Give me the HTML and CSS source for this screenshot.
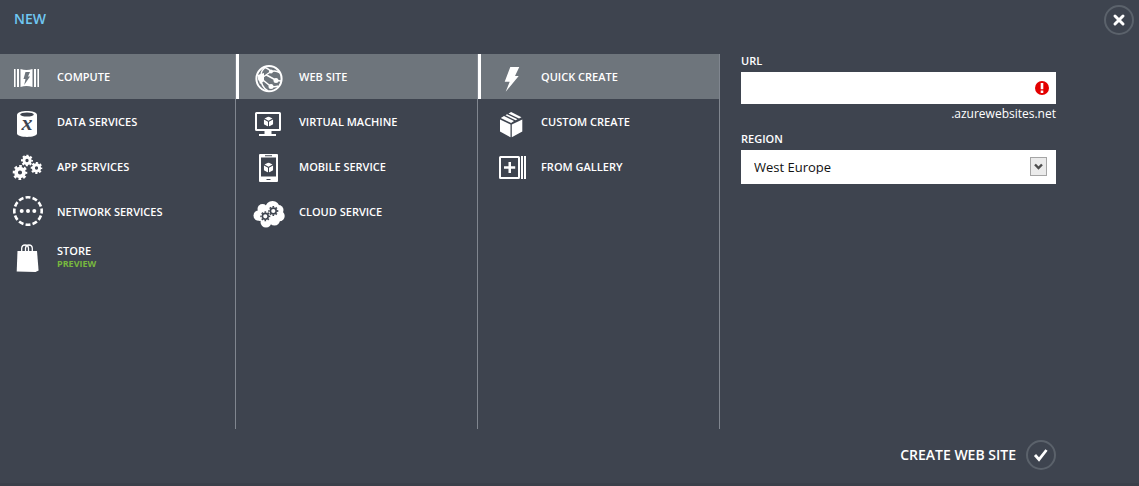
FILE: index.html
```html
<!DOCTYPE html>
<html lang="en">
<head>
<meta charset="utf-8">
<title>New web site</title>
<meta name="viewport" content="width=device-width, initial-scale=1">
<link rel="stylesheet" href="styles.css">
</head>
<body>
<svg class="defs" aria-hidden="true">
  <symbol id="gear" viewBox="-8 -8 16 16">
    <circle r="4.200" fill="none" stroke="currentColor" stroke-width="4"/>
    <circle r="6.600" fill="none" stroke="currentColor" stroke-width="2.800" pathLength="16" stroke-dasharray="1.100 .9" stroke-dashoffset="0.550"/>
  </symbol>
  <symbol id="cube" viewBox="0 0 10 10">
    <path fill="currentColor" d="M5 0L9 2 5 4.2 1 2ZM.4 3L4.5 5.2V10L.4 7.8ZM9.6 3L5.5 5.2V10L9.6 7.8Z"/>
  </symbol>
</svg>
<main class="drawer">
  <header class="top">
    <h1 class="title">NEW</h1>
    <button class="round" type="button" aria-label="Close">
      <svg class="glyph" viewBox="0 0 26 26"><path d="M9 9L17 17M17 9L9 17" stroke="currentColor" stroke-width="3" stroke-linecap="round"/></svg>
    </button>
  </header>

  <div class="body">
    <nav class="column first" aria-label="Category">
      <button class="item selected" type="button">
        <svg class="icon" viewBox="0 0 34 34"><path fill="currentColor" d="M4 9h1.6v18H4zM7 9h2v18H7zM24 9h2v18h-2zM27.4 9H29v18h-1.6zM10.5 9q6 2 12 0v18q-6-2-12 0z"/><path class="cut" d="M15.5 12h4.500l-2 4.500h2L14.200 25l1.300-6H13.500z"/></svg>
        <span class="label">COMPUTE</span>
      </button>
      <button class="item" type="button">
        <svg class="icon" viewBox="0 0 34 34"><path fill="currentColor" d="M7 10C7 4.700 27 4.700 27 10V28.500C27 33 7 33 7 28.500Z"/><ellipse class="cut" cx="17" cy="9.500" rx="6.800" ry="2"/><text class="cut variable" x="17" y="25" text-anchor="middle">x</text></svg>
        <span class="label">DATA SERVICES</span>
      </button>
      <button class="item" type="button">
        <svg class="icon" viewBox="0 0 34 34"><use href="#gear" x="11" y="4.500" width="12" height="12"/><use href="#gear" x="2.500" y="15" width="15" height="15"/><use href="#gear" x="20.500" y="12" width="12" height="12"/></svg>
        <span class="label">APP SERVICES</span>
      </button>
      <button class="item" type="button">
        <svg class="icon" viewBox="0 0 34 34"><circle cx="18" cy="16" r="13.700" fill="none" stroke="currentColor" stroke-width="2.600" pathLength="48" stroke-dasharray="2.800 1.200" stroke-dashoffset="1.400"/><g fill="currentColor"><circle cx="11.700" cy="16" r="2"/><circle cx="18" cy="16" r="2"/><circle cx="24.300" cy="16" r="2"/></g></svg>
        <span class="label">NETWORK SERVICES</span>
      </button>
      <button class="item" type="button">
        <svg class="icon" viewBox="0 0 34 34"><path fill="currentColor" d="M7.500 11H27L28.600 30.500 25.500 32 6.700 31.500Z"/><path fill="none" stroke="currentColor" stroke-width="1.300" d="M11.700 12V8Q12 5 15 5T18.500 8V12M15.500 12V8Q16 5 19 5T22.300 8V12"/></svg>
        <span class="label">STORE<small class="tag">PREVIEW</small></span>
      </button>
    </nav>

    <nav class="column" aria-label="Service">
      <button class="item selected" type="button">
        <svg class="icon" viewBox="0 0 34 34"><g fill="none" stroke="currentColor"><circle cx="17" cy="18.700" r="12.600" stroke-width="2"/><path stroke-width="1.500" d="M9 18.500L19 11.500Q15 7.500 12 7.500M19 11.500Q24 10 28 13M9 18.500Q8 12 12.500 8M9 18.500Q9 27 16 31M9 18.500L19 26.500Q24 27 26 26M14.500 15L24.500 20.500M24.500 20.500L29 21"/></g><g fill="currentColor"><path d="M5.500 15L12 13V21L8 24Z"/><circle cx="9" cy="18.500" r="3"/><circle cx="19" cy="11.500" r="2"/><circle cx="24" cy="20.500" r="2.500"/><circle cx="19" cy="26.500" r="2.500"/></g></svg>
        <span class="label">WEB SITE</span>
      </button>
      <button class="item" type="button">
        <svg class="icon" viewBox="0 0 34 34"><rect x="4" y="8" width="24" height="17" rx=".5" fill="none" stroke="currentColor" stroke-width="2"/><path fill="currentColor" d="M12.500 25h7v4h4.500v2H7v-2h5.500z"/><use href="#cube" x="11.500" y="11.500" width="10" height="10"/></svg>
        <span class="label">VIRTUAL MACHINE</span>
      </button>
      <button class="item" type="button">
        <svg class="icon" viewBox="0 0 34 34"><path fill="currentColor" fill-rule="evenodd" d="M8 4H25Q26 4 26 5V31Q26 32 25 32H8Q7 32 7 31V5Q7 4 8 4ZM9 7.500V26.500H24V7.500ZM13 5.300V6.200H20V5.300ZM14.500 29V30H18.500V29Z"/><use href="#cube" x="11.500" y="12.500" width="10" height="10"/></svg>
        <span class="label">MOBILE SERVICE</span>
      </button>
      <button class="item" type="button">
        <svg class="icon" viewBox="0 0 34 34"><g fill="currentColor"><circle cx="6.800" cy="20.500" r="5.300"/><circle cx="10.500" cy="14" r="5"/><circle cx="20.500" cy="13.200" r="7.200"/><circle cx="26.500" cy="15" r="5"/><circle cx="27.500" cy="21" r="5.200"/><circle cx="14" cy="27" r="5.500"/><circle cx="22.500" cy="25" r="5.500"/><path d="M7 14H27V25.800H7z"/></g><g class="cut" fill="none"><circle cx="13.300" cy="21.300" r="2.900" stroke-width="1.600"/><circle cx="13.300" cy="21.300" r="4.300" stroke-width="1.400" pathLength="16" stroke-dasharray="1 1" stroke-dashoffset=".5"/><circle cx="21.300" cy="16" r="2.900" stroke-width="1.600"/><circle cx="21.300" cy="16" r="4.300" stroke-width="1.400" pathLength="16" stroke-dasharray="1 1" stroke-dashoffset=".5"/></g></svg>
        <span class="label">CLOUD SERVICE</span>
      </button>
    </nav>

    <nav class="column" aria-label="Method">
      <button class="item selected" type="button">
        <svg class="icon" viewBox="0 0 34 34"><path fill="currentColor" d="M16.300 7H25.300L21 16H24.700L11.700 31.700 15.700 21.700H10.700Z"/></svg>
        <span class="label">QUICK CREATE</span>
      </button>
      <button class="item" type="button">
        <svg class="icon" viewBox="0 0 34 34"><path fill="currentColor" d="M6 14.500L16.500 19.500V32.300L6 26.500ZM28.300 14.500L17.800 19.500V32.300L28.300 26.500ZM6.800 13L10 11.100 20 16.100 17.100 18ZM11.500 10.200L13 9.300 23.500 14.200 21.500 15.200ZM14.500 8.400L17.100 7 27.500 12.300 25 13.500Z"/></svg>
        <span class="label">CUSTOM CREATE</span>
      </button>
      <button class="item" type="button">
        <svg class="icon" viewBox="0 0 34 34"><rect x="6" y="7" width="19" height="21" rx=".5" fill="none" stroke="currentColor" stroke-width="2"/><path fill="currentColor" d="M27 6h2v23h-2zM30 6h2v23h-2zM14.500 12h2.500v4.200h4.200v2.600H17V23h-2.500v-4.200H10v-2.600h4.500z"/></svg>
        <span class="label">FROM GALLERY</span>
      </button>
    </nav>

    <form class="form" id="create">
      <label class="caption" for="url">URL</label>
      <div class="control">
        <input class="box" id="url" type="text" aria-invalid="true" aria-describedby="suffix">
        <svg class="error" viewBox="0 0 14 14" aria-hidden="true"><circle cx="7" cy="7" r="7" fill="#e30000"/><path fill="#fff" d="M5.700 2h2.600v6.200H5.700zM5.700 9.600h2.600V12H5.700z"/></svg>
      </div>
      <span class="suffix" id="suffix">.azurewebsites.net</span>
      <label class="caption" for="region">REGION</label>
      <div class="control">
        <select class="box list" id="region"><option>West Europe</option></select>
        <svg class="arrow" viewBox="0 0 17 19" aria-hidden="true"><rect x=".5" y=".5" width="16" height="18" fill="#ebebeb" stroke="#a5a5a5"/><path fill="none" stroke="#4d4d4d" stroke-width="2.400" d="M5 7.500L8.500 11 12 7.500"/></svg>
      </div>
    </form>
  </div>

  <footer class="bottom">
    <button class="create" type="submit" form="create">
      CREATE WEB SITE
      <span class="round"><svg class="glyph" viewBox="0 0 26 26" aria-hidden="true"><path d="M7 13L11 17.500 18.500 8" fill="none" stroke="currentColor" stroke-width="2.800"/></svg></span>
    </button>
  </footer>
</main>
</body>
</html>
```
FILE: styles.css
```css
:root {
  --back: #3e444f;
  --selected: #6e757c;
  --line: #80868f;
  --ring: #5b626b;
}

* { box-sizing: border-box; }

body {
  margin: 0;
  background: var(--back);
  color: #fff;
  font-family: "Open Sans", "Noto Sans", sans-serif;
  font-size: 11px;
  line-height: 14px;
}

button, input, select {
  font: inherit;
  color: inherit;
  margin: 0;
}

button {
  border: 0;
  background: none;
  padding: 0;
  cursor: pointer;
}

.defs {
  position: absolute;
  width: 0;
  height: 0;
}

.drawer {
  display: flex;
  flex-direction: column;
  min-height: 100vh;
  border-bottom: 3px solid #3a404a;
}

.top {
  display: flex;
  justify-content: space-between;
  align-items: flex-start;
  height: 54px;
  padding: 5px 5px 0 14px;
}

.title {
  margin: 4px 0 0;
  color: #70c8f3;
  font-size: 14px;
  line-height: 20px;
  font-weight: 600;
}

.round {
  display: flex;
  align-items: center;
  justify-content: center;
  width: 30px;
  height: 30px;
  border: 2px solid var(--ring);
  border-radius: 50%;
}

.glyph {
  width: 26px;
  height: 26px;
}

.body {
  display: grid;
  grid-template-columns: 236fr 242fr 242fr 419fr;
  flex: 1;
}

.column {
  display: flex;
  flex-direction: column;
  min-width: 0;
  border-right: 1px solid var(--line);
}

.item {
  --surface: var(--back);
  display: flex;
  align-items: center;
  gap: 13px;
  height: 45px;
  padding-left: 16px;
  font-weight: 600;
  text-align: left;
}

.first .item { padding-left: 10px; }

.selected {
  --surface: var(--selected);
  background: var(--selected);
}

.column:not(.first) .selected { box-shadow: inset 3px 0 #fff; }

.icon {
  flex: none;
  width: 34px;
  height: 34px;
}

.cut { fill: var(--surface); }

g.cut {
  fill: none;
  stroke: var(--surface);
}

.variable {
  font: italic bold 22px "Liberation Serif", serif;
}

.tag {
  display: block;
  color: #78b83e;
  font-size: 9px;
  line-height: 12px;
  font-weight: 700;
}

.form {
  display: flex;
  flex-direction: column;
  width: 100%;
  max-width: 336px;
  padding-left: 21px;
}

.caption {
  line-height: 14px;
  padding-bottom: 4px;
  font-weight: 600;
}

.control { position: relative; }

.box {
  display: block;
  width: 100%;
  height: 32px;
  padding: 0 40px 0 13px;
  border: 0;
  border-radius: 0;
  background: #fff;
  color: #111;
  font-size: 13px;
}

.list {
  appearance: none;
  height: 34px;
}

.error {
  position: absolute;
  top: 9px;
  right: 7px;
  width: 14px;
  height: 14px;
}

.arrow {
  position: absolute;
  top: 7px;
  right: 9px;
  width: 17px;
  height: 19px;
  pointer-events: none;
}

.suffix {
  align-self: flex-end;
  padding-bottom: 8px;
  font-size: 12px;
  line-height: 20px;
}

.bottom {
  display: flex;
  padding: 11px 83px 13px;
}

.create {
  display: flex;
  align-items: center;
  gap: 10px;
  margin-left: auto;
  font-size: 14px;
  font-weight: 600;
}
```
